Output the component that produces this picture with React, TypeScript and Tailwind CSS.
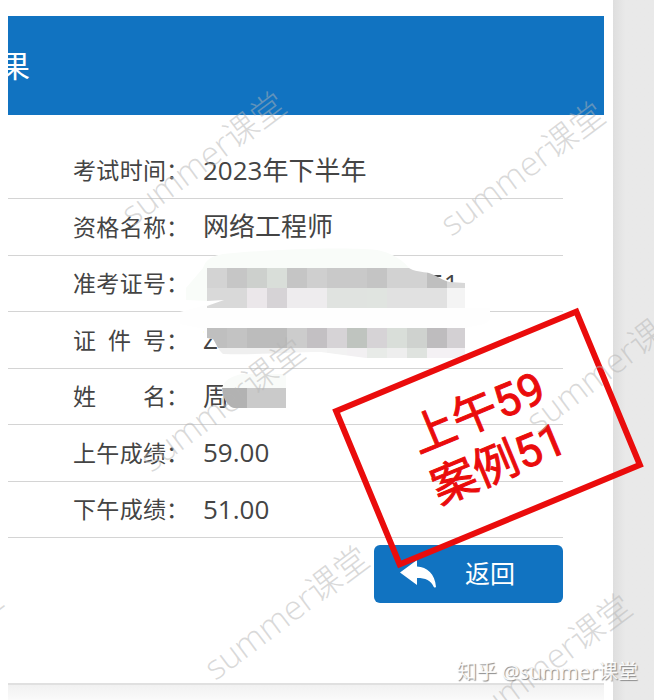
import clsx from "clsx";

const RESULTS = [
  { label: "考试时间", value: "2023年下半年" },
  { label: "资格名称", value: "网络工程师" },
  { label: "准考证号", value: "51", valueClass: "pl-[226px]" },
  { label: "证件号", value: "Z" },
  { label: "姓名", value: "周" },
  { label: "上午成绩", value: "59.00" },
  { label: "下午成绩", value: "51.00" },
];

export default function App() {
  return (
    <div className="relative flex min-h-screen overflow-hidden bg-white font-['Open_Sans','Noto_Sans_CJK_SC',sans-serif] text-[#444]">
      <div className="flex flex-1 flex-col pl-2 pr-[9px] pt-4">
        <header className="flex h-[99px] items-center overflow-hidden bg-[#1173c1]">
          <h1 className="-ml-2 text-[30px] leading-none text-white">果</h1>
        </header>

        <main className="flex-1 pr-[41px] pt-7">
          <table className="h-[395px] w-full border-collapse">
            <tbody>
              {RESULTS.map((row) => (
                <ResultRow key={row.label} {...row} />
              ))}
            </tbody>
          </table>

          <div className="mt-[7px] flex justify-end">
            <button
              type="button"
              className="flex h-[58px] w-[189px] items-center rounded-md bg-[#1173c1] pl-[26px] text-[25px] text-white"
            >
              <ReplyIcon />
              <span className="ml-7">返回</span>
            </button>
          </div>
        </main>

        <footer className="h-[17px] border-t-2 border-[#e0e0e0] bg-linear-to-b from-[#f1f1f1] to-[#fafafa]" />
      </div>

      <aside className="w-[41px] bg-linear-to-r from-[#dedede] to-[#e9e9e9] to-30%" />

      <Mosaic />
      <Stamp />

      {/* WATERMARKS */}
      <Watermark className="left-[105px] top-[134px]" />
      <Watermark className="left-[424px] top-[144px]" />
      <Watermark className="left-[124px] top-[380px]" />
      <Watermark className="left-[510px] top-[341px]" />
      <Watermark className="left-[188px] top-[588px]" />
      <Watermark className="left-[451px] top-[636px]" />
      <Watermark className="-left-[178px] top-[628px]" />

      <p className="absolute bottom-[14px] right-4 whitespace-nowrap text-[20px] leading-7 text-white/90 [text-shadow:1px_1px_1px_#888]">
        知乎 @summer课堂
      </p>
    </div>
  );
}

const ResultRow = ({ label, value, valueClass }: { label: string; value: string; valueClass?: string }) => (
  <tr className="border-b border-[#d4d4d4]">
    <th scope="row" className="w-[195px] pl-[65px] text-[23px] font-normal">
      <span className="flex">
        <span className="flex w-[93px] justify-between">
          {label.split("").map((char) => (
            <span key={char}>{char}</span>
          ))}
        </span>
        ：
      </span>
    </th>
    <td className={clsx("text-[26px]", valueClass)}>{value}</td>
  </tr>
);

const Watermark = ({ className }: { className: string }) => (
  <span
    aria-hidden="true"
    className={clsx(
      "pointer-events-none absolute -rotate-37 whitespace-nowrap text-[34px] font-light leading-[48px] text-[#b4b4b4]/50",
      className
    )}
  >
    summer课堂
  </span>
);

const Stamp = () => (
  <div className="pointer-events-none absolute left-[355px] top-[352px] flex h-[172px] w-[266px] -rotate-[22.5deg] flex-col items-center justify-center border-[6px] border-[#ea0c0c] font-[Roboto,'Noto_Sans_CJK_SC',sans-serif] text-[45px] leading-[55px] text-[#ea0c0c] [-webkit-text-stroke:1px_#ea0c0c]">
    <p>上午59</p>
    <p>案例51</p>
  </div>
);

const ReplyIcon = () => (
  <svg width="37" height="28" viewBox="0 0 37 28" fill="currentColor" aria-hidden="true">
    <path d="M0 12.5 17 0v6.500c10 .5 18 7 19 20.500-1.500 1-2 .5-2.500-.5-2.500-6-8-8.500-16.500-8.500v7z" />
  </svg>
);

const CELL = 20;
const NUMBER_TOP = ["#d3d3d3", "#c6c6c6", "#cdd0cd", "#d9ded9", "#c5c5c5", "#cfcfcf", "#c9c9c9", "#c9c9c9", "#c4c4c4", "#d2d2d2", "#d2d2d2", "#bfbfbf", "#d8d8d8"];
const NUMBER_BOTTOM = ["#d9d9d9", "#d9d9d9", "#ebe7ea", "#d6d3d6", "#eeecee", "#eeecee", "#e0e3e0", "#e0e3e0", "#e0e4e0", "#e1e1e1", "#e1e1e1", "#e1e1e1", "#f4f4f4"];
const ID_TOP = ["#bfbfbf", "#c3c3c3", "#bcbcbc", "#bcbcbc", "#cccccc", "#c3c0c3", "#d6d3d6", "#bfc4bf", "#d6d3d6", "#d9ded9", "#cfd2cf", "#bebcbe", "#d3d0d3"];
const ID_BOTTOM = ["#efefef", "#efefef", "#efefef", "#efefef", "#f4f4f4", "#f4f4f4", "#f2f2f2", "#f2f0f2", "#e8ebe8", "#eeeeee", "#dfe3df", "#f4f1f4", "#f4f1f4"];

const CellRow = ({ colors, y, height = CELL }: { colors: string[]; y: number; height?: number }) => (
  <>
    {colors.map((color, i) => (
      <rect key={i} x={27 + i * CELL} y={y} width={i === 12 ? 19 : CELL} height={height} fill={color} />
    ))}
  </>
);

/* Pixelated strokes that hide the personal numbers */
const Mosaic = () => (
  <svg
    className="pointer-events-none absolute left-[180px] top-[240px]"
    width="310"
    height="180"
    viewBox="0 0 310 180"
    aria-hidden="true"
  >
    <defs>
      <clipPath id="number">
        <path d="M27 28H229c4 3 14 4 20 5 9 3 14 8 21 9 5 0 10 1 15 1v25H27v-2l17-6-17 1z" />
      </clipPath>
      <clipPath id="id">
        <path d="M27 88h258v30H186l-45-6c-30 0-60 3-98 2-5-4-7-11-10-15l-6-1z" />
      </clipPath>
      <clipPath id="name">
        <path d="M42 148h64v20H54c-5-1-9-7-11-13z" />
      </clipPath>
    </defs>
    <path d="M6 60V48l17-20c3-9 9-12 20-14 50-5 120-7 154-4 12 2 25 9 32 18v20H27v13z" fill="#f9fcf9" />
    <path d="M0 72 44 60l-17 8H310c4 4 3 12-6 16l-19 4H34v11l-10-1V88H20L0 84z" fill="#fefefe" />
    <g clipPath="url(#number)">
      <CellRow colors={NUMBER_TOP} y={28} />
      <CellRow colors={NUMBER_BOTTOM} y={48} />
    </g>
    <g clipPath="url(#id)">
      <CellRow colors={ID_TOP} y={88} />
      <CellRow colors={ID_BOTTOM} y={108} height={10} />
    </g>
    <path d="M42 148c2-8 10-12 20-14h44v14z" fill="#f9fbf9" />
    <g clipPath="url(#name)">
      <rect x="40" y="148" width="27" height="20" fill="#b2b2b2" />
      <rect x="67" y="148" width="39" height="20" fill="#cacaca" />
    </g>
  </svg>
);
